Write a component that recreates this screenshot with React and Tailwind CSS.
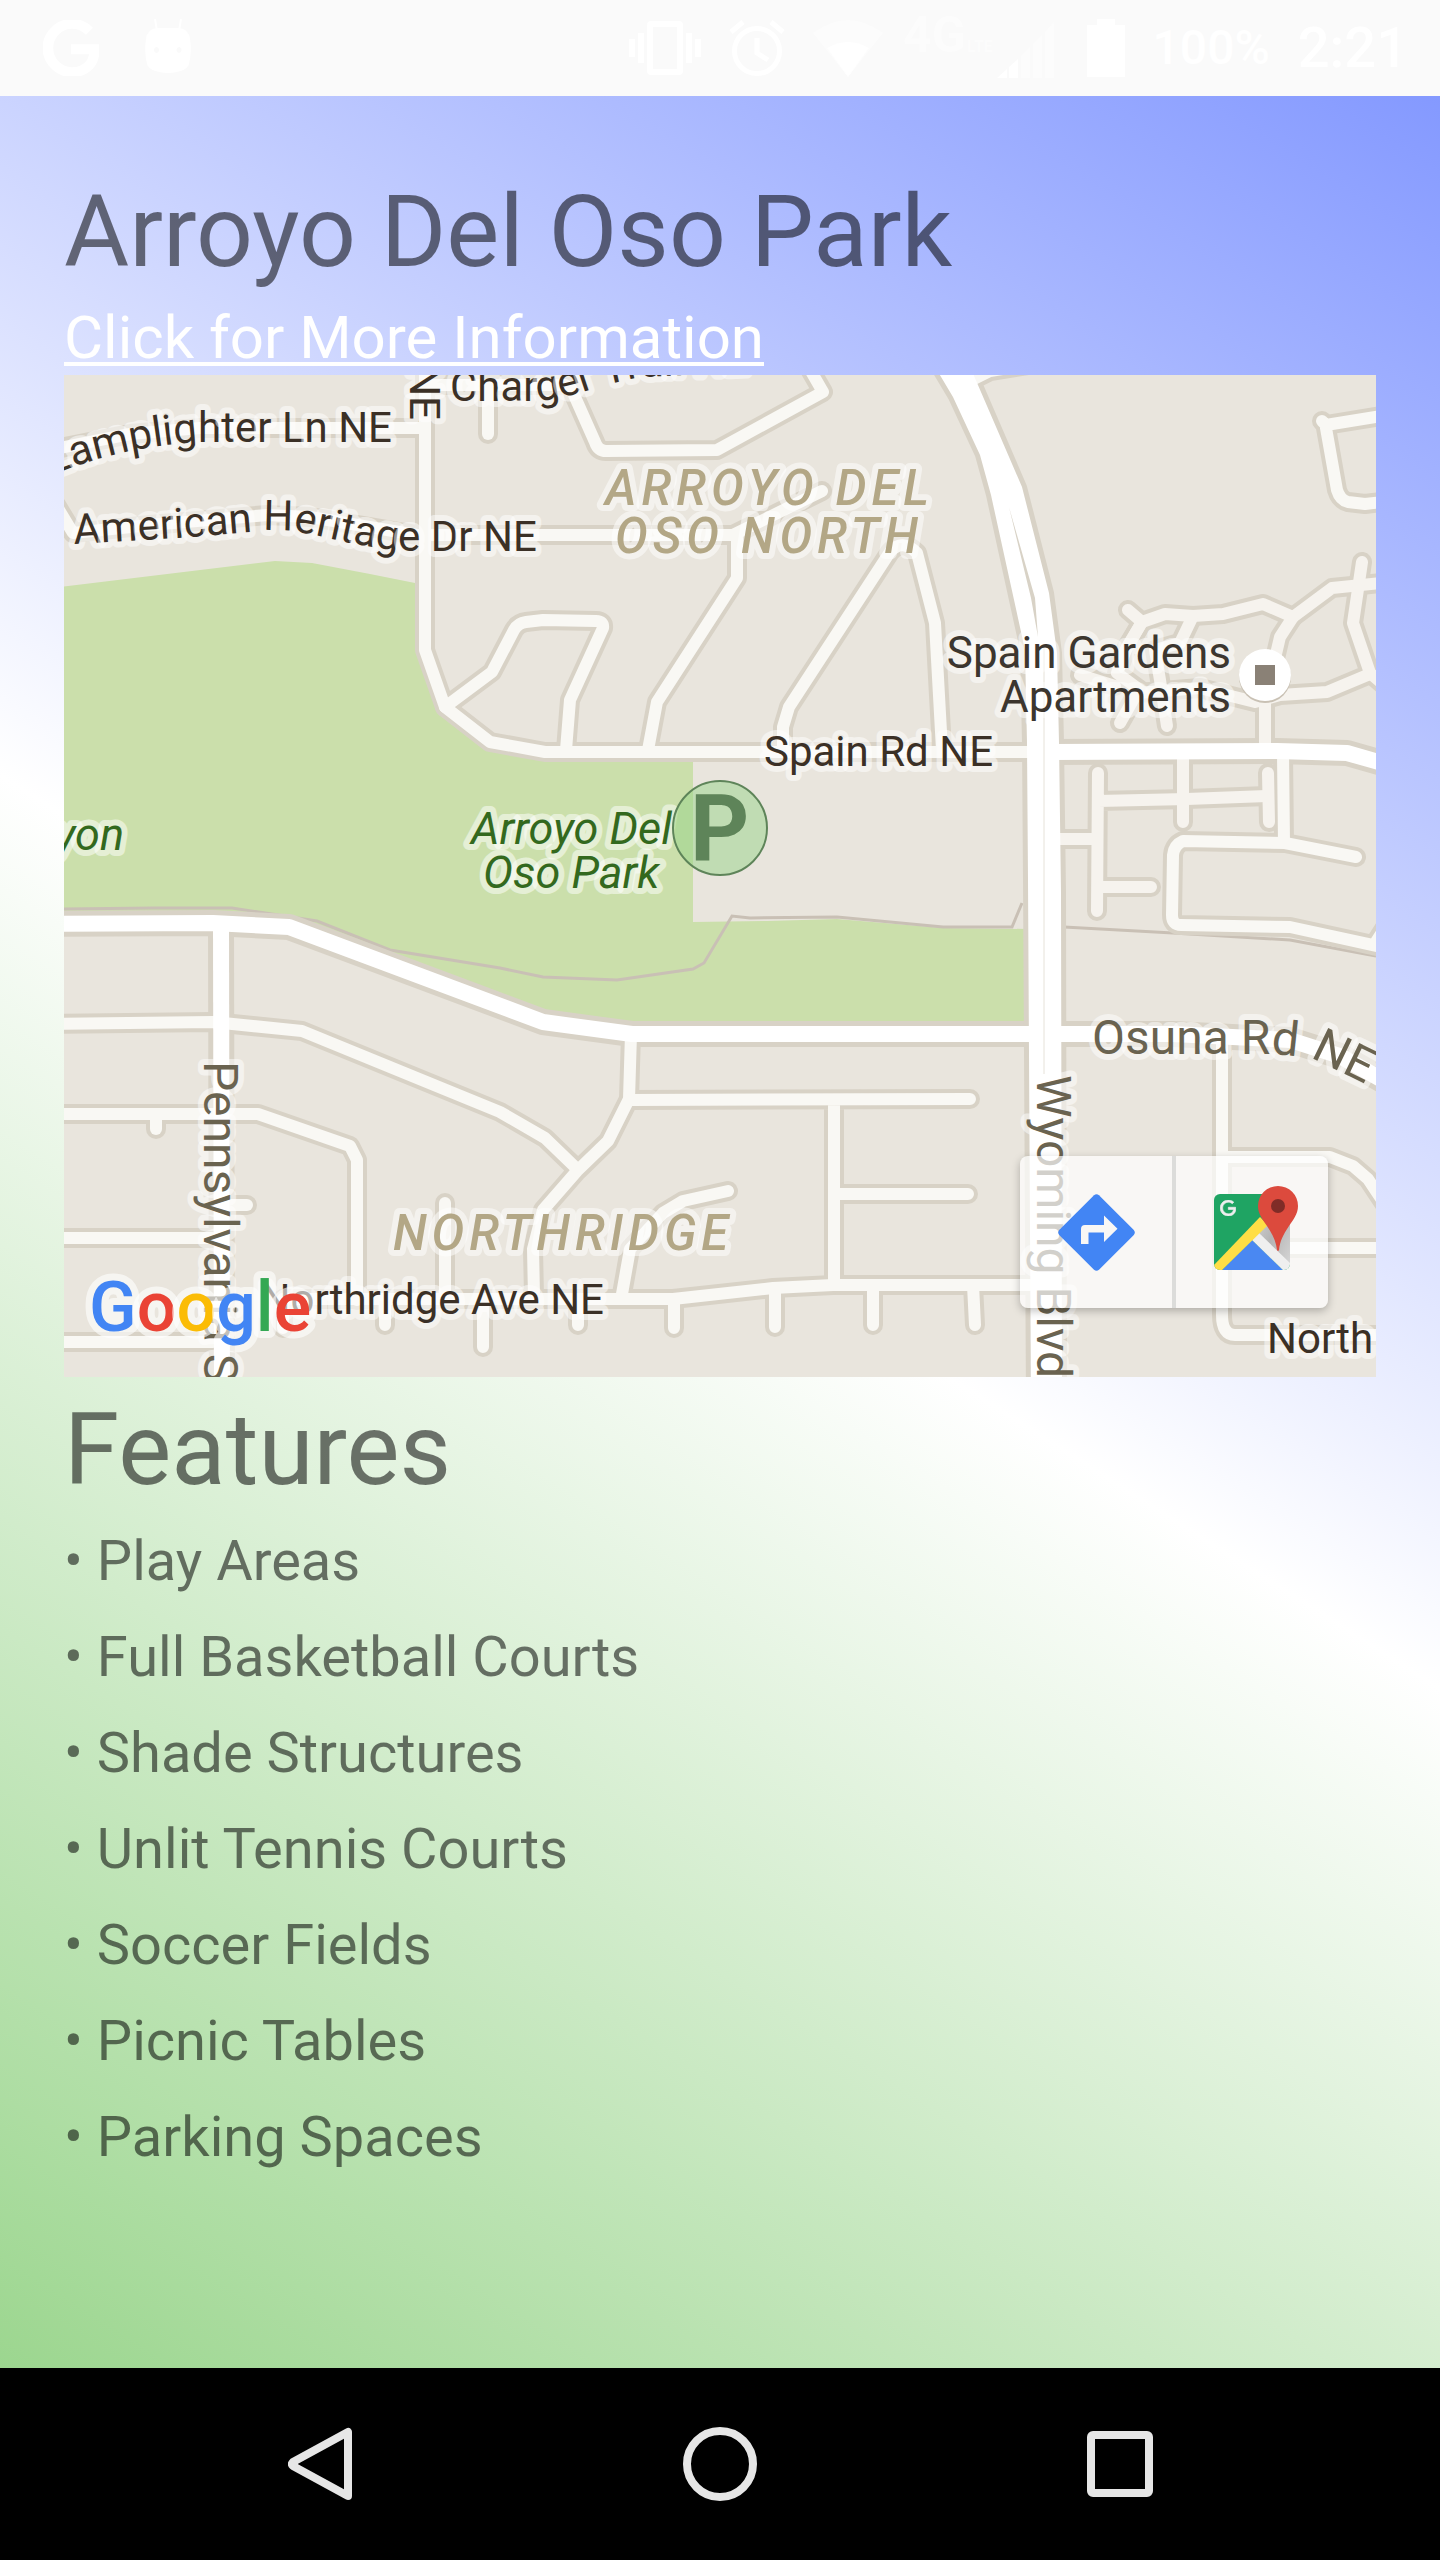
import React from "react";
import { SiGoogle } from "react-icons/si";

const FEATURES = [
  "Play Areas",
  "Full Basketball Courts",
  "Shade Structures",
  "Unlit Tennis Courts",
  "Soccer Fields",
  "Picnic Tables",
  "Parking Spaces",
];

const STREETS = [
  "M40 452L130 434L200 428H425",
  "M425 360V650L445 707L490 742L545 752H1030",
  "M445 707L492 672L514 630Q518 623 526 622L543 620L596 621Q604 621 603 628L570 700L566 750",
  "M56 505L73 533L150 525L267 515L310 517L417 535H733L822 491",
  "M737 538V578L657 702L648 750",
  "M425 385H565L571 388L595 442Q598 451 606 451L717 450L823 392L808 366",
  "M488 385V434",
  "M783 750V727L789 707L890 552Q902 538 917 553L935 623L942 750",
  "M972 380L990 371L1028 365",
  "M1400 413L1326 425L1322 421M1326 428L1337 490Q1340 500 1348 502L1365 504L1390 501",
  "M1283 753L1284 843M1356 857L1285 843L1183 841Q1174 845 1173 855L1172 915Q1172 925 1181 925L1290 927L1400 951M1374 945L1390 920",
  "M40 1024L213 1022L302 1031L500 1112L545 1138L575 1167",
  "M40 1114H258L350 1146L357 1160V1300",
  "M156 1116V1129",
  "M225 1205H247",
  "M40 1238H213M40 1342H213",
  "M283 1299H673L773 1288L833 1285H1030",
  "M385 1299V1325M483 1299V1347M578 1299V1325M674 1299V1328M775 1290V1327M873 1285V1325M973 1285L975 1325M283 1299V1328",
  "M445 1203V1299",
  "M631 1034L629 1099L608 1141L577 1171L543 1210L533 1249L534 1296",
  "M629 1100L970 1099M834 1100V1284M836 1194H968",
  "M728 1191L683 1201L663 1213L630 1249L622 1294",
  "M1222 1040V1315Q1222 1335 1235 1335H1400M1222 1157H1330L1353 1166L1368 1179L1386 1206M1222 1248H1400",
];

const LANES = [
  "M1128 610L1142 622M1120 660L1142 622L1165 614L1193 616L1223 614L1263 604L1293 617L1332 588L1400 581",
  "M1362 562L1353 623L1370 673L1392 692",
  "M1293 617L1280 637L1273 667M1265 690V750",
  "M1142 622L1127 647L1117 673L1140 690M1080 675L1115 686M1120 723L1137 693",
  "M1192 618L1180 643L1155 650L1160 680L1167 726",
  "M1137 693L1200 688L1227 695L1255 702L1280 695L1327 692L1370 674",
  "M1098 773L1097 911M1060 839H1093M1098 801L1187 799L1267 796",
  "M1183 753V822M1268 773L1269 822M1100 887H1151",
];

const AVENUES = [
  "M1050 752L1277 751L1347 753L1410 771",
  "M40 924L213 923L289 927L543 1022L632 1034H1173L1290 1040L1340 1056L1400 1090",
  "M221 923L222 1400",
];

const WYOMING =
  "M928 355L953 397L980 455L991 495L1025 650L1027 743L1028 880L1031 1400H1062L1061 893L1059 743L1057 653L1049 593L1022 487L965 355Z";

function Strokes({ paths, color, width, cap }) {
  return (
    <g fill="none" stroke={color} strokeWidth={width} strokeLinecap={cap} strokeLinejoin="round">
      {paths.map((d) => (
        <path key={d} d={d} />
      ))}
    </g>
  );
}

function MapDrawing() {
  return (
    <svg viewBox="64 375 1312 1002" className="block h-auto w-full" role="img" aria-label="Map of Arroyo Del Oso Park">
      <rect x="64" y="375" width="1312" height="1002" fill="#e9e5dd" />
      <path
        d="M60 587L275 561L312 563L370 574L415 583L425 650L445 707L490 742L545 752H693V922L767 921L837 919L943 928L1028 929V1033H632L543 1022L289 927L60 924Z"
        fill="#cbdfab"
      />
      <g fill="none" stroke="#c9c0b5" strokeWidth="3">
        <path d="M64 909L153 908H232L317 921L390 950L500 968L543 977L617 980L693 969L704 963L732 916L750 918L837 917L943 927H1012L1022 903" />
        <path d="M1064 927L1173 933L1290 940L1376 956" />
      </g>

      <Strokes paths={STREETS} color="#d8d2c6" width="20" cap="round" />
      <Strokes paths={LANES} color="#d8d2c6" width="20" cap="round" />
      <Strokes paths={AVENUES} color="#d8d2c6" width="26" cap="butt" />
      <path d={WYOMING} fill="#d8d2c6" stroke="#d8d2c6" strokeWidth="10" />
      <Strokes paths={LANES} color="#f6f3ee" width="12" cap="round" />
      <Strokes paths={STREETS} color="#f9f8f4" width="12" cap="round" />
      <Strokes paths={AVENUES} color="#ffffff" width="16" cap="butt" />
      <path d={WYOMING} fill="#ffffff" />
      <path d="M1009 507L1035 598L1038 637L1031 598Z" fill="#d8d2c6" />
      <path d="M1044 645V1074" stroke="#e6e2d9" strokeWidth="1" />

      <circle cx="1265" cy="677" r="26" fill="#c9c1b4" />
      <circle cx="1265" cy="675" r="26" fill="#ffffff" />
      <rect x="1255" y="665" width="20" height="20" fill="#8a8176" />

      <defs>
        <path id="lamplighter" d="M28 486Q95 453 175 444L195 442H392" />
        <path id="heritage" d="M74 544L180 538L275 530C310 530 350 547 405 551H560" />
        <path id="charger" d="M450 401H540Q572 397 600 386L640 377L760 372" />
        <path id="osuna" d="M1092 1054H1265Q1295 1054 1324 1064L1400 1101" />
      </defs>

      <g
        className="font-['Roboto',sans-serif]"
        fontSize="42"
        stroke="#ffffff"
        strokeOpacity="0.5"
        strokeWidth="12"
        strokeLinejoin="round"
        paintOrder="stroke"
      >
        <g fill="#3b3026">
          <text textAnchor="end">
            <textPath href="#lamplighter" startOffset="100%">Lamplighter Ln NE</textPath>
          </text>
          <text>
            <textPath href="#heritage">American Heritage Dr NE</textPath>
          </text>
          <text>
            <textPath href="#charger">Charger Trail NE</textPath>
          </text>
          <text transform="translate(410 420) rotate(90)" textAnchor="end">NE</text>
          <text x="764" y="766">Spain Rd NE</text>
          <text x="604" y="1314" textAnchor="end">Northridge Ave NE</text>
          <text x="1267" y="1353">North</text>
        </g>
        <g fill="#3c362f" fontSize="44" textAnchor="end">
          <text x="1231" y="668">Spain Gardens</text>
          <text x="1231" y="712">Apartments</text>
        </g>
        <g fill="#33691e" fontSize="45" fontStyle="italic">
          <text x="471" y="844">Arroyo Del</text>
          <text x="483" y="888">Oso Park</text>
          <text x="124" y="850" textAnchor="end">Canyon</text>
        </g>
        <g fill="#6a6350" fontSize="48">
          <text transform="translate(204 1061) rotate(90)">Pennsylvania St</text>
          <text transform="translate(1037 1075) rotate(90)">Wyoming Blvd</text>
          <text>
            <textPath href="#osuna">Osuna Rd NE</textPath>
          </text>
        </g>
        <g fill="#b3a786" fontSize="49" fontStyle="italic" fontWeight="500" className="tracking-widest">
          <text x="605" y="505">ARROYO DEL</text>
          <text x="615" y="553">OSO NORTH</text>
          <text x="393" y="1250">NORTHRIDGE</text>
        </g>
      </g>

      <circle cx="720" cy="828" r="47" fill="#97d389" fillOpacity="0.5" stroke="#5e8459" strokeWidth="2" />
      <text x="690" y="861" fontSize="92" className="font-['Roboto',sans-serif] font-bold" fill="#5e8459">P</text>

      <text
        x="89"
        y="1331"
        fontSize="70"
        fontWeight="500"
        className="font-['Roboto',sans-serif]"
        stroke="#ffffff"
        strokeOpacity="0.6"
        strokeWidth="14"
        strokeLinejoin="round"
        paintOrder="stroke"
      >
        <tspan fill="#4285f4">G</tspan>
        <tspan fill="#ea4335">o</tspan>
        <tspan fill="#fbbc05">o</tspan>
        <tspan fill="#4285f4">g</tspan>
        <tspan fill="#34a853">l</tspan>
        <tspan fill="#ea4335">e</tspan>
      </text>
    </svg>
  );
}

function DirectionsIcon() {
  return (
    <svg viewBox="0 0 77 77" className="size-[77px]" aria-hidden="true">
      <path
        d="M36 1.2Q38.500 -.8 41 1.200L75.800 36Q77.800 38.500 75.800 41L41 75.800Q38.500 77.800 36 75.800L1.200 41Q-.8 38.500 1.200 36Z"
        fill="#4285f4"
      />
      <path d="M23 50V35Q23 31 27 31H46V21.500L59.500 34.700L46 48V38.500H30.500V50Z" fill="#f8f7f5" />
    </svg>
  );
}

function MapsIcon() {
  return (
    <svg viewBox="0 0 76 76" className="size-[76px] overflow-visible" aria-hidden="true">
      <defs>
        <clipPath id="tile">
          <rect width="76" height="76" rx="6" />
        </clipPath>
        <linearGradient id="shade" x1="0" y1="0" x2="1" y2="1">
          <stop offset="0" stopColor="#d8d8d8" />
          <stop offset="0.500" stopColor="#b4b4b4" />
          <stop offset="1" stopColor="#d6d6d6" />
        </linearGradient>
      </defs>
      <g clipPath="url(#tile)">
        <rect width="76" height="76" fill="#1fa463" />
        <path d="M44 39L76 7V71Z" fill="url(#shade)" />
        <path d="M38 46L69 76H8Z" fill="#4a88f2" />
        <path d="M38 46L44.500 38.500L78 71V80H73Z" fill="#efefef" />
        <path d="M-2 73L46 23L54 31L6 78Z" fill="#ffde45" />
      </g>
      <SiGoogle x="6" y="6" width="22" height="22" color="#eeeeee" stroke="#eeeeee" strokeWidth="1" />
      <path
        d="M64 -8A20 20 0 0 0 44 12C44 20 49 26 53 32C59 41 62 47 63 56Q64 58 65 56C66 47 69 41 75 32C79 26 84 20 84 12A20 20 0 0 0 64 -8Z"
        fill="#dc4a3d"
      />
      <circle cx="64" cy="12" r="7" fill="#802c27" />
    </svg>
  );
}

function StatusBar() {
  return (
    <header className="flex h-24 shrink-0 items-center justify-between bg-[#fafafa] pr-8 pl-[43px] text-white">
      <div className="flex items-center gap-[46px]">
        <SiGoogle className="size-14" stroke="currentColor" strokeWidth="1" aria-label="Google" />
        <svg viewBox="0 0 46 54" className="mb-1 h-[54px] w-[46px] overflow-visible" aria-hidden="true">
          <path d="M10 0L12 12M36 0L34 12" stroke="currentColor" strokeWidth="2" />
          <path
            fill="currentColor"
            fillRule="evenodd"
            d="M12 9H34Q44 10 45 20Q47 32 44 45Q42 53 23 54Q4 53 2 45Q-1 32 1 20Q2 10 12 9ZM11.500 28a2.500 3 0 1 0 .1 0ZM34 28a2.500 3 0 1 0 .1 0Z"
          />
        </svg>
      </div>
      <div className="flex items-center gap-7">
        <svg viewBox="0 0 72 54" className="h-[54px] w-[72px]" fill="currentColor" aria-hidden="true">
          <path d="M0 18H6V36H0ZM9 12H15V42H9ZM57 12H63V42H57ZM66 18H72V36H66Z" />
          <path fillRule="evenodd" d="M22 0H50Q54 0 54 4V50Q54 54 50 54H22Q18 54 18 50V4Q18 0 22 0ZM24 6V48H48V6Z" />
        </svg>
        <svg viewBox="0 0 56 56" className="size-14" fill="none" stroke="currentColor" strokeWidth="5" aria-hidden="true">
          <circle cx="28" cy="31" r="22.500" />
          <path d="M28 18V33L39 40M2 12L14 2M42 2L54 12" />
        </svg>
        <svg viewBox="0 0 70 57" className="h-[57px] w-[70px]" fill="currentColor" aria-hidden="true">
          <path d="M0 13Q35 -13 70 13L35 57Z" opacity="0.4" />
          <path d="M14 28Q35 16 56 28L35 57Z" />
        </svg>
        <svg viewBox="0 0 156 64" className="-ml-2 h-16 w-[156px]" fill="currentColor" aria-hidden="true">
          <g opacity="0.4" className="font-['Roboto',sans-serif] font-bold">
            <text x="0" y="36" fontSize="50">4G</text>
            <text x="64" y="36" fontSize="16">LTE</text>
          </g>
          <path d="M94 62L104 53V62ZM106 51L115 43V62H106Z" />
          <path d="M118 40L127 31V62H118ZM130 28L139 19V62H130ZM142 16L151 6V62H142Z" opacity="0.4" />
        </svg>
        <svg viewBox="0 0 38 58" className="h-[58px] w-[38px]" fill="currentColor" aria-hidden="true">
          <path d="M10 0H28V6H38V58H0V6H10Z" />
        </svg>
        <span className="text-[48px] leading-none font-medium">100%</span>
        <span className="text-[56px] leading-none font-medium">2:21</span>
      </div>
    </header>
  );
}

export default function App() {
  return (
    <div className="flex min-h-screen flex-col font-['Roboto',sans-serif]">
      <StatusBar />

      <main className="flex-1 bg-[linear-gradient(32.4deg,#9cd68f,#ffffff_50%,#8499ff)] px-16 pt-[76px] pb-16">
        <h1 className="text-[100px] leading-[120px] text-black/54">Arroyo Del Oso Park</h1>
        <a
          href="#more-information"
          className="mt-2.5 block w-fit text-[60px] leading-[72px] text-white underline decoration-4 underline-offset-4"
        >
          Click for More Information
        </a>

        <section className="relative mt-px" aria-label="Location">
          <MapDrawing />
          <div className="absolute right-12 bottom-[69px] flex rounded-lg bg-white/70 shadow-[0_3px_8px_rgba(0,0,0,0.25)]">
            <button type="button" aria-label="Directions" className="grid size-[152px] place-items-center">
              <DirectionsIcon />
            </button>
            <span className="w-1 bg-[#dcdcda]" />
            <button type="button" aria-label="Open in Google Maps" className="grid size-[152px] place-items-center">
              <MapsIcon />
            </button>
          </div>
        </section>

        <h2 className="mt-[13px] text-[100px] leading-[120px] text-black/54">Features</h2>
        <ul className="mt-[3px] text-[56px] leading-[96px] text-black/54">
          {FEATURES.map((feature) => (
            <li key={feature}>• {feature}</li>
          ))}
        </ul>
      </main>

      <nav className="grid h-48 shrink-0 grid-cols-3 bg-black px-[120px] text-[#e6e6e6]" aria-label="System">
        <button type="button" aria-label="Back" className="grid place-items-center">
          <svg viewBox="0 0 64 74" className="h-[74px] w-16" fill="none" stroke="currentColor" strokeWidth="8" strokeLinejoin="round" aria-hidden="true">
            <path d="M60 5V69L5 39Q3 37 5 35Z" />
          </svg>
        </button>
        <button type="button" aria-label="Home" className="grid place-items-center">
          <svg viewBox="0 0 74 74" className="size-[74px]" fill="none" stroke="currentColor" strokeWidth="8" aria-hidden="true">
            <circle cx="37" cy="37" r="33" />
          </svg>
        </button>
        <button type="button" aria-label="Recent apps" className="grid place-items-center">
          <svg viewBox="0 0 66 66" className="size-[66px]" fill="none" stroke="currentColor" strokeWidth="8" aria-hidden="true">
            <rect x="4" y="4" width="58" height="58" rx="2" />
          </svg>
        </button>
      </nav>
    </div>
  );
}
